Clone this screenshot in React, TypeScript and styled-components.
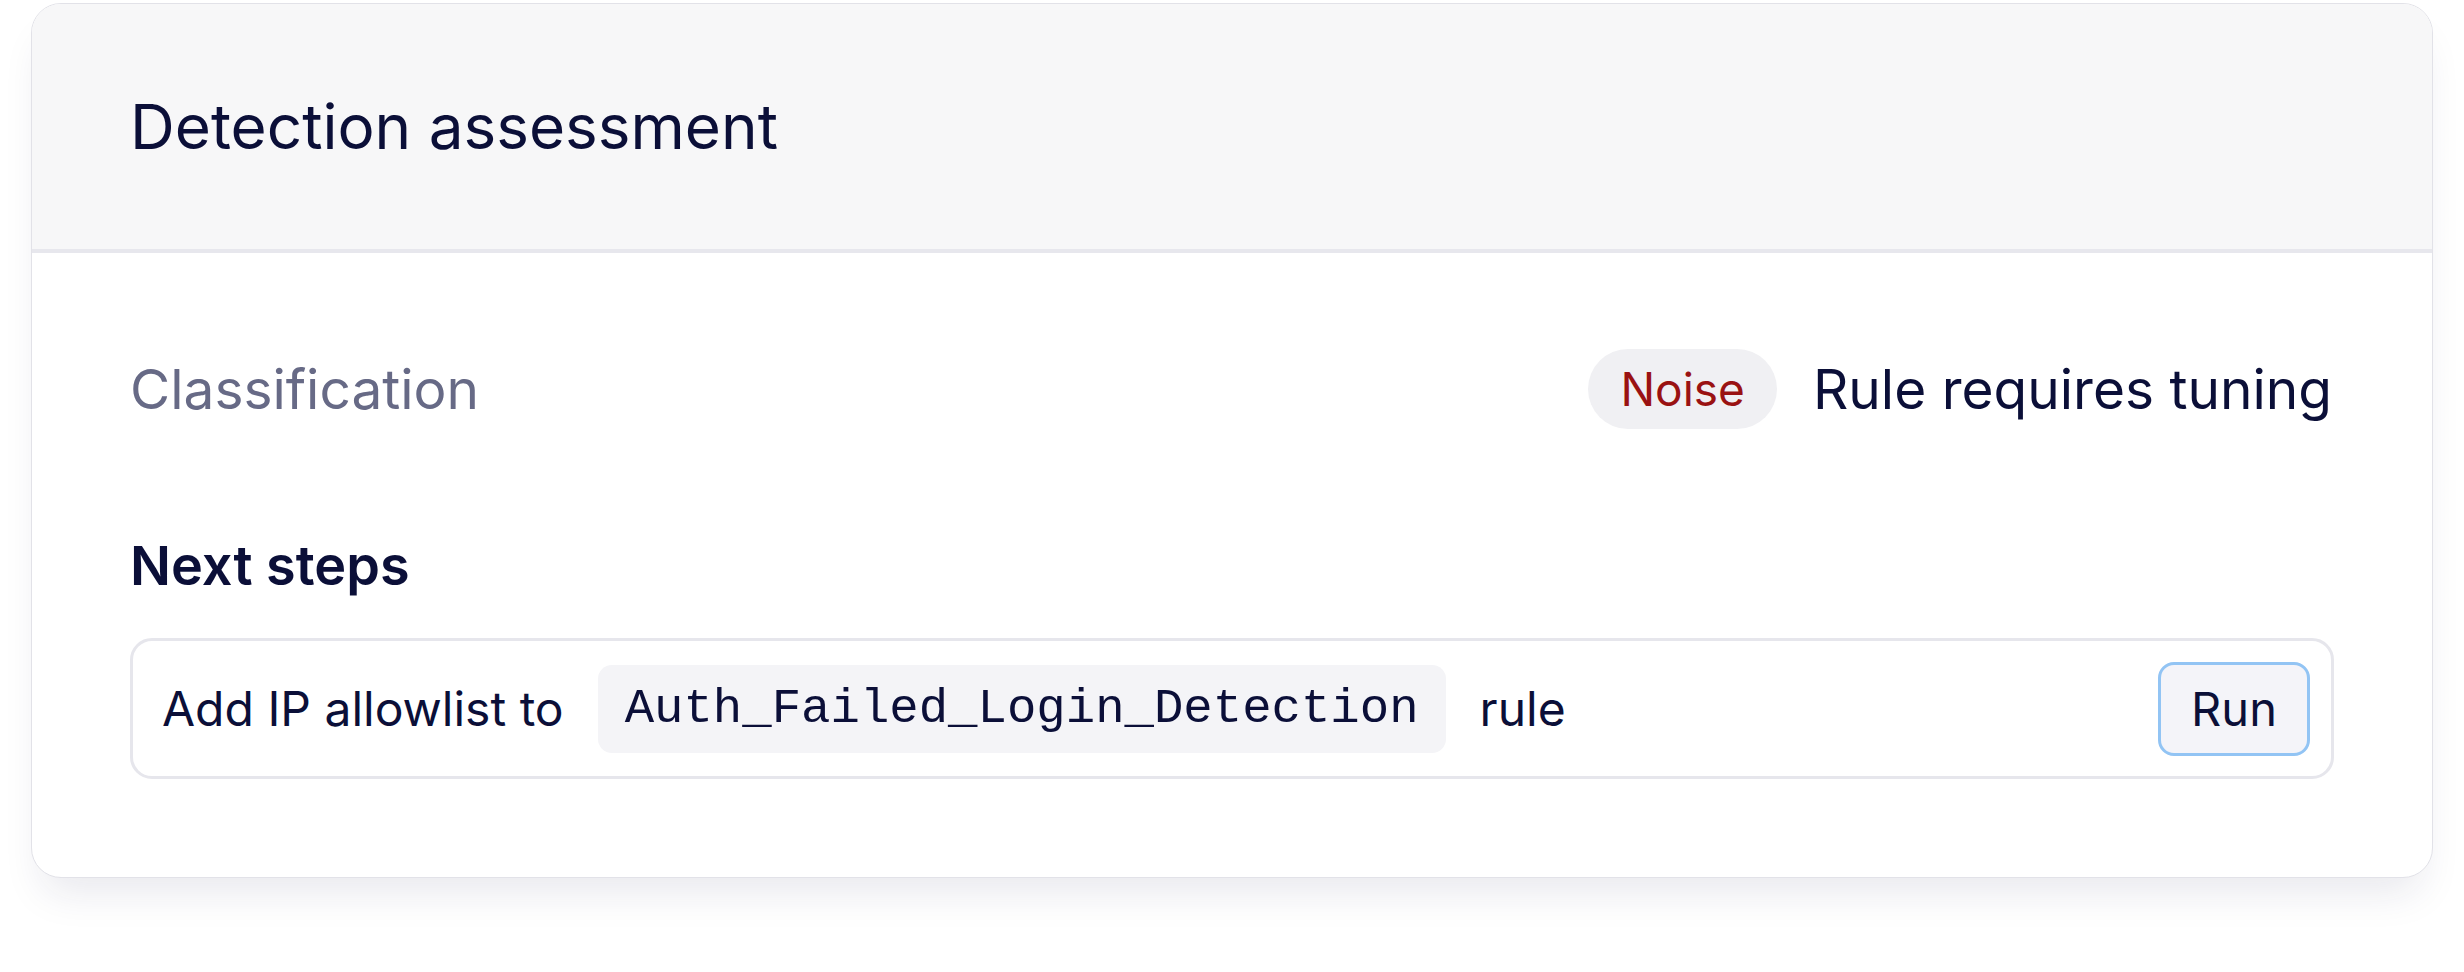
import React from "react";
import styled, { createGlobalStyle } from "styled-components";

const Global = createGlobalStyle`
  html, body { margin: 0; padding: 0; background: #ffffff; }
  body { font-family: Inter, "Noto Sans", sans-serif; color: #0b0f38; }
  * { box-sizing: border-box; }
`;

const Page = styled.div`
  min-height: 100vh;
  padding: 3px 31px 0;
`;

const Card = styled.section`
  border: 1px solid #e2e2e8;
  border-radius: 30px;
  overflow: hidden;
  background: #ffffff;
  box-shadow: 0 26px 40px -12px rgba(30, 30, 80, 0.1);
`;

const Header = styled.header`
  height: 249px;
  display: flex;
  align-items: center;
  padding: 0 98px;
  background: #f7f7f8;
  border-bottom: 4px solid #e7e7ed;
`;

const Title = styled.h1`
  margin: 0;
  font-size: 62px;
  font-weight: 400;
  color: #0b0f38;
`;

const Body = styled.div`
  padding: 96px 98px 98px;
  display: flex;
  flex-direction: column;
`;

const ClassRow = styled.div`
  height: 80px;
  display: flex;
  align-items: center;
  justify-content: space-between;
`;

const Label = styled.span`
  font-size: 55px;
  color: #676a86;
`;

const Verdict = styled.div`
  display: flex;
  align-items: center;
  gap: 36px;
  padding-right: 2px;
`;

const Badge = styled.span`
  height: 80px;
  padding: 0 32px;
  border-radius: 40px;
  background: #f0f0f3;
  color: #9a1212;
  font-size: 46px;
  display: inline-flex;
  align-items: center;
`;

const VerdictText = styled.span`
  font-size: 55px;
  color: #0b0f38;
`;

const Heading = styled.h2`
  margin: 104px 0 39px;
  font-size: 54px;
  line-height: 66px;
  font-weight: 600;
  color: #0b0f38;
`;

const StepBox = styled.div`
  height: 141px;
  border: 3px solid #e6e6ec;
  border-radius: 22px;
  display: flex;
  align-items: center;
  padding: 0 21px 0 29px;
`;

const StepText = styled.span`
  font-size: 48px;
  color: #0b0f38;
  white-space: pre;
`;

const Code = styled.code`
  height: 88px;
  margin: 0 34px;
  padding: 0 27px;
  border-radius: 14px;
  background: #f4f4f7;
  font-family: "Liberation Mono", "DejaVu Sans Mono", monospace;
  font-size: 49px;
  color: #0b0f38;
  display: inline-flex;
  align-items: center;
`;

const Spacer = styled.div`
  flex: 1;
`;

const RunButton = styled.button`
  height: 94px;
  width: 152px;
  border: 3px solid #92c4f4;
  border-radius: 16px;
  background: #f4f4f9;
  font-family: Inter, "Noto Sans", sans-serif;
  font-size: 47px;
  color: #0b0f38;
  display: inline-flex;
  align-items: center;
  justify-content: center;
  padding: 0;
  cursor: pointer;
`;

export default function App() {
  return (
    <>
      <Global />
      <Page>
        <Card>
          <Header>
            <Title>Detection assessment</Title>
          </Header>
          <Body>
            <ClassRow>
              <Label>Classification</Label>
              <Verdict>
                <Badge>Noise</Badge>
                <VerdictText>Rule requires tuning</VerdictText>
              </Verdict>
            </ClassRow>
            <Heading>Next steps</Heading>
            <StepBox>
              <StepText>Add IP allowlist to</StepText>
              <Code>Auth_Failed_Login_Detection</Code>
              <StepText>rule</StepText>
              <Spacer />
              <RunButton>Run</RunButton>
            </StepBox>
          </Body>
        </Card>
      </Page>
    </>
  );
}
